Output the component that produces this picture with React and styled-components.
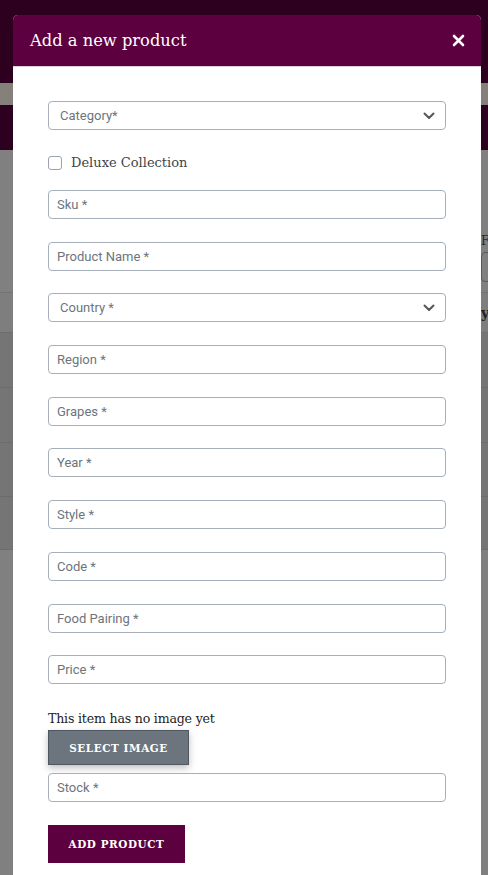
import React from "react";
import styled, { createGlobalStyle } from "styled-components";

const GlobalStyle = createGlobalStyle`
  html, body {
    margin: 0;
    padding: 0;
    height: 875px;
    overflow: hidden;
  }
  * { box-sizing: border-box; }
`;

const serif = `"DejaVu Serif", Georgia, serif`;
const sans = `Roboto, "Liberation Sans", Arial, sans-serif`;

const Page = styled.div`
  position: relative;
  width: 488px;
  height: 875px;
  overflow: hidden;
  background: #808080;
`;

const TopBar = styled.div`
  height: 83px;
  background: #2e0020;
`;

const Strip = styled.div`
  height: 22px;
  background: #85807a;
`;

const SubBar = styled.div`
  height: 45px;
  background: #2e0020;
`;

const Filters = styled.div`
  height: 143px;
  display: flex;
  justify-content: flex-end;
  padding-top: 84px;
  border-bottom: 1px solid #737373;
`;

const FilterBox = styled.div`
  width: 7px;
  font-family: ${serif};
  font-size: 12px;
  color: #1d2a3a;
  overflow: hidden;
  white-space: nowrap;
`;

const FilterInput = styled.div`
  margin-top: 4px;
  height: 30px;
  width: 20px;
  border: 1px solid #5a5a5a;
  border-radius: 4px;
`;

const HeadRow = styled.div`
  height: 40px;
  background: #7e7e7e;
  border-bottom: 1px solid #6e6e6e;
  display: flex;
  justify-content: flex-end;
  align-items: center;
  font-family: ${serif};
  font-weight: 700;
  font-size: 14px;
  color: #222;
  overflow: hidden;
`;

const Row = styled.div`
  height: ${(p) => p.h}px;
  background: #757575;
  border-bottom: 1px solid #6c6c6c;
`;

const Modal = styled.div`
  position: absolute;
  top: 15px;
  left: 13px;
  width: 468px;
  background: #fff;
  border-radius: 5px 5px 0 0;
  overflow: hidden;
`;

const Header = styled.div`
  height: 52px;
  background: #5c0040;
  display: flex;
  align-items: center;
  justify-content: space-between;
  padding: 0 16px 0 17px;
  border-bottom: 1px solid #d8d0d6;
`;

const Title = styled.h5`
  margin: 0;
  font-family: ${serif};
  font-weight: 400;
  font-size: 16.3px;
  color: #fff;
`;

const Close = styled.button`
  border: none;
  background: none;
  padding: 0;
  display: flex;
  color: #fff;
`;

const Body = styled.form`
  padding: 34px 35px 40px 35px;
  display: flex;
  flex-direction: column;
`;

const Field = styled.div`
  position: relative;
  margin-bottom: ${(p) => (p.mb != null ? p.mb : 22.7)}px;
`;

const Input = styled.input`
  display: block;
  width: 100%;
  height: 29px;
  border: 1px solid #a7b0ba;
  border-radius: 4px;
  padding: 0 8px;
  font-family: ${sans};
  font-size: 13px;
  color: #495057;
  background: #fff;
  outline: none;
  &::placeholder { color: #6c757d; }
`;

const Select = styled.div`
  height: 29px;
  border: 1px solid #a7b0ba;
  border-radius: 4px;
  padding: 0 10px 0 11px;
  display: flex;
  align-items: center;
  justify-content: space-between;
  font-family: ${sans};
  font-size: 13px;
  color: #6c757d;
`;

const CheckRow = styled.label`
  display: flex;
  align-items: center;
  gap: 9px;
  margin: 25px 0 20px;
  font-family: ${serif};
  font-size: 13px;
  color: #444;
`;

const Box = styled.span`
  width: 14px;
  height: 14px;
  border: 1px solid #9aa3ad;
  border-radius: 3px;
`;

const Note = styled.p`
  margin: 27px 0 4px;
  font-family: ${serif};
  font-size: 12.6px;
  color: #222;
  letter-spacing: -0.2px;
`;

const Button = styled.button`
  align-self: flex-start;
  border-radius: 0;
  font-family: ${serif};
  font-weight: 700;
  font-size: 10.4px;
  letter-spacing: 0.6px;
  text-transform: uppercase;
  color: #fff;
  background: ${(p) => p.bg};
  height: ${(p) => p.h}px;
  width: ${(p) => p.w}px;
  padding: 0;
  margin-bottom: ${(p) => p.mb}px;
  box-shadow: ${(p) => (p.shadow ? "0 3px 7px rgba(0,0,0,0.25)" : "none")};
  border: ${(p) => (p.shadow ? "1px solid #4f5861" : "none")};
`;

const Chevron = () => (
  <svg width="12" height="8" viewBox="0 0 12 8">
    <path d="M1.5 1.5 L6 6 L10.5 1.5" fill="none" stroke="#555" strokeWidth="2" strokeLinecap="round" strokeLinejoin="round" />
  </svg>
);

const fields = [
  "Region *",
  "Grapes *",
  "Year *",
  "Style *",
  "Code *",
  "Food Pairing *",
];

export default function App() {
  return (
    <Page>
      <GlobalStyle />
      <TopBar />
      <Strip />
      <SubBar />
      <Filters>
        <FilterBox>
          F
          <FilterInput />
        </FilterBox>
      </Filters>
      <HeadRow>
        <span style={{ width: 7, overflow: "hidden" }}>y</span>
      </HeadRow>
      <Row h={55} />
      <Row h={55} />
      <Row h={54} />
      <Row h={53} />

      <Modal>
        <Header>
          <Title>Add a new product</Title>
          <Close type="button" aria-label="Close">
            <svg width="13" height="13" viewBox="0 0 13 13">
              <path d="M2 2 L11 11 M11 2 L2 11" stroke="#fff" strokeWidth="2.6" strokeLinecap="round" />
            </svg>
          </Close>
        </Header>
        <Body>
          <Field mb={0}>
            <Select>
              Category*
              <Chevron />
            </Select>
          </Field>
          <CheckRow>
            <Box />
            Deluxe Collection
          </CheckRow>
          <Field>
            <Input placeholder="Sku *" />
          </Field>
          <Field>
            <Input placeholder="Product Name *" />
          </Field>
          <Field>
            <Select>
              Country *
              <Chevron />
            </Select>
          </Field>
          {fields.map((f) => (
            <Field key={f}>
              <Input placeholder={f} />
            </Field>
          ))}
          <Field mb={0}>
            <Input placeholder="Price *" />
          </Field>
          <Note>This item has no image yet</Note>
          <Button type="button" bg="#6c757d" h={35} w={141} mb={8} shadow>
            Select Image
          </Button>
          <Field mb={23}>
            <Input placeholder="Stock *" />
          </Field>
          <Button type="button" bg="#5c0040" h={38} w={137} mb={0}>
            Add Product
          </Button>
        </Body>
      </Modal>
    </Page>
  );
}
